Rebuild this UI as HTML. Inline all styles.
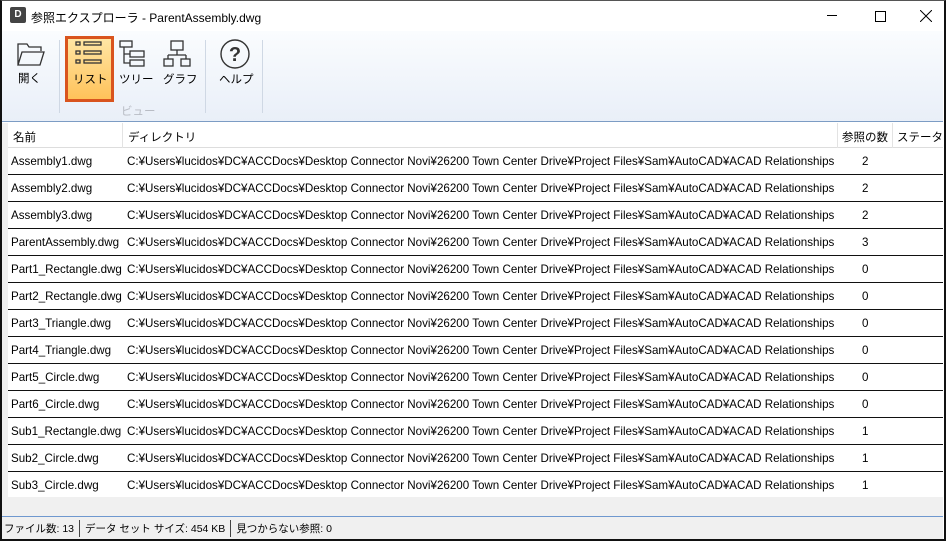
<!DOCTYPE html>
<html><head><meta charset="utf-8"><style>
*{margin:0;padding:0;box-sizing:border-box}
body{width:946px;height:541px;overflow:hidden;background:#fff;font-family:"Liberation Sans","Noto Sans CJK JP",sans-serif;font-size:12px;color:#000;position:relative}
.frame{position:absolute;left:0;top:0;width:946px;height:541px;border:2px solid #111;border-top:1px solid #555}
.title{position:absolute;left:2px;top:1px;width:941px;height:30px;background:#fff}
.title .t{position:absolute;left:29px;top:8px;font-size:12px}
.tb{position:absolute;left:2px;top:31px;width:941px;height:91px;background:linear-gradient(#fafcfe,#e9eff8);border-bottom:1px solid #7c9cc4}
.sep{position:absolute;top:9px;width:1px;height:73px;background:#cfd8e4}
.lbl{position:absolute;font-size:11.5px;text-align:center}
.sel{position:absolute;left:63px;top:5px;width:49px;height:66px;border:3px solid #d9541e;background:linear-gradient(#ffe6a4,#ffc25a)}
.hdr{position:absolute;left:8px;top:123px;width:935px;height:25px;background:#fff;border-bottom:1px solid #ddd;font-size:11.5px}
.hdr span{position:absolute;top:6px;white-space:nowrap}
.hdr i{position:absolute;top:0;width:1px;height:25px;background:#e3e3e3}
.row{position:absolute;left:8px;width:935px;height:27px;border-bottom:1px solid #111;background:#fff;font-size:11.6px}
.row span{position:absolute;top:7px;white-space:nowrap}
.left{position:absolute;left:2px;top:123px;width:6px;height:393px;background:#f0f0f0}
.gap{position:absolute;left:8px;top:497px;width:935px;height:19px;background:#f0f0f0}
.status{position:absolute;left:2px;top:516px;width:941px;height:23px;background:#f0f0f0;border-top:1px solid #6f98cf;display:flex;align-items:center;font-size:10.5px;padding-left:2px;white-space:nowrap}
.status i{width:1px;height:17px;background:#444;margin:0 5px}
</style></head><body>
<div class="title">
<div style="position:absolute;left:8px;top:6px;width:16px;height:16px;background:#444;border-radius:2px;color:#fff;font-size:10px;font-weight:bold;text-align:center;line-height:16px">D</div>
<span class="t">参照エクスプローラ - ParentAssembly.dwg</span>
<div style="position:absolute;left:825px;top:14px;width:10px;height:1px;background:#000"></div>
<div style="position:absolute;left:873px;top:10px;width:11px;height:11px;border:1px solid #000"></div>
<svg style="position:absolute;left:918px;top:9px" width="12" height="12"><path d="M0 0L12 12M12 0L0 12" stroke="#000" stroke-width="1"/></svg>
</div>
<div class="tb">
<svg style="position:absolute;left:14px;top:10px" width="30" height="26" fill="none" stroke="#333" stroke-width="1.3"><path d="M2 24V3h9l2 3h12v4M2 24l4-13h22l-4 13z"/></svg>
<div class="lbl" style="left:16px;top:39px">開く</div>
<div class="sep" style="left:57px"></div>
<div class="sel"></div>
<svg style="position:absolute;left:73px;top:9px" width="28" height="27" fill="none" stroke="#333" stroke-width="1.3"><rect x="1" y="2" width="4" height="3"/><rect x="9" y="2" width="17" height="3"/><rect x="1" y="11" width="4" height="3"/><rect x="9" y="11" width="17" height="3"/><rect x="1" y="20" width="4" height="3"/><rect x="9" y="20" width="17" height="3"/></svg>
<div class="lbl" style="left:71px;top:40px">リスト</div>
<svg style="position:absolute;left:117px;top:8px" width="30" height="28" fill="none" stroke="#333" stroke-width="1.3"><rect x="1" y="2" width="12" height="6"/><path d="M5 8v16h6M5 15h6"/><rect x="11" y="12" width="14" height="6"/><rect x="11" y="21" width="14" height="6"/></svg>
<div class="lbl" style="left:117px;top:40px">ツリー</div>
<svg style="position:absolute;left:161px;top:8px" width="30" height="28" fill="none" stroke="#333" stroke-width="1.3"><rect x="8" y="2" width="12" height="9"/><path d="M14 11v5M5 16h18M5 16v4M23 16v4"/><rect x="1" y="20" width="9" height="7"/><rect x="18" y="20" width="9" height="7"/></svg>
<div class="lbl" style="left:161px;top:40px">グラフ</div>
<div class="lbl" style="left:119px;top:72px;color:#b8bcc4">ビュー</div>
<div class="sep" style="left:203px"></div>
<svg style="position:absolute;left:217px;top:7px" width="32" height="32"><circle cx="16" cy="16" r="14" fill="none" stroke="#333" stroke-width="1.4"/><text x="16" y="23" font-family="Liberation Sans" font-size="20" font-weight="bold" text-anchor="middle" fill="#333">?</text></svg>
<div class="lbl" style="left:217px;top:40px">ヘルプ</div>
<div class="sep" style="left:260px"></div>
</div>
<div class="left"></div>
<div class="hdr"><span style="left:5px">名前</span><i style="left:114px"></i><span style="left:120px">ディレクトリ</span><i style="left:829px"></i><span style="left:834px">参照の数</span><i style="left:884px"></i><span style="left:889px">ステータス</span></div>
<div class="row" style="top:148px"><span style="left:3px">Assembly1.dwg</span><span style="left:119px">C:¥Users¥lucidos¥DC¥ACCDocs¥Desktop Connector Novi¥26200 Town Center Drive¥Project Files¥Sam¥AutoCAD¥ACAD Relationships</span><span style="left:854px">2</span></div>
<div class="row" style="top:175px"><span style="left:3px">Assembly2.dwg</span><span style="left:119px">C:¥Users¥lucidos¥DC¥ACCDocs¥Desktop Connector Novi¥26200 Town Center Drive¥Project Files¥Sam¥AutoCAD¥ACAD Relationships</span><span style="left:854px">2</span></div>
<div class="row" style="top:202px"><span style="left:3px">Assembly3.dwg</span><span style="left:119px">C:¥Users¥lucidos¥DC¥ACCDocs¥Desktop Connector Novi¥26200 Town Center Drive¥Project Files¥Sam¥AutoCAD¥ACAD Relationships</span><span style="left:854px">2</span></div>
<div class="row" style="top:229px"><span style="left:3px">ParentAssembly.dwg</span><span style="left:119px">C:¥Users¥lucidos¥DC¥ACCDocs¥Desktop Connector Novi¥26200 Town Center Drive¥Project Files¥Sam¥AutoCAD¥ACAD Relationships</span><span style="left:854px">3</span></div>
<div class="row" style="top:256px"><span style="left:3px">Part1_Rectangle.dwg</span><span style="left:119px">C:¥Users¥lucidos¥DC¥ACCDocs¥Desktop Connector Novi¥26200 Town Center Drive¥Project Files¥Sam¥AutoCAD¥ACAD Relationships</span><span style="left:854px">0</span></div>
<div class="row" style="top:283px"><span style="left:3px">Part2_Rectangle.dwg</span><span style="left:119px">C:¥Users¥lucidos¥DC¥ACCDocs¥Desktop Connector Novi¥26200 Town Center Drive¥Project Files¥Sam¥AutoCAD¥ACAD Relationships</span><span style="left:854px">0</span></div>
<div class="row" style="top:310px"><span style="left:3px">Part3_Triangle.dwg</span><span style="left:119px">C:¥Users¥lucidos¥DC¥ACCDocs¥Desktop Connector Novi¥26200 Town Center Drive¥Project Files¥Sam¥AutoCAD¥ACAD Relationships</span><span style="left:854px">0</span></div>
<div class="row" style="top:337px"><span style="left:3px">Part4_Triangle.dwg</span><span style="left:119px">C:¥Users¥lucidos¥DC¥ACCDocs¥Desktop Connector Novi¥26200 Town Center Drive¥Project Files¥Sam¥AutoCAD¥ACAD Relationships</span><span style="left:854px">0</span></div>
<div class="row" style="top:364px"><span style="left:3px">Part5_Circle.dwg</span><span style="left:119px">C:¥Users¥lucidos¥DC¥ACCDocs¥Desktop Connector Novi¥26200 Town Center Drive¥Project Files¥Sam¥AutoCAD¥ACAD Relationships</span><span style="left:854px">0</span></div>
<div class="row" style="top:391px"><span style="left:3px">Part6_Circle.dwg</span><span style="left:119px">C:¥Users¥lucidos¥DC¥ACCDocs¥Desktop Connector Novi¥26200 Town Center Drive¥Project Files¥Sam¥AutoCAD¥ACAD Relationships</span><span style="left:854px">0</span></div>
<div class="row" style="top:418px"><span style="left:3px">Sub1_Rectangle.dwg</span><span style="left:119px">C:¥Users¥lucidos¥DC¥ACCDocs¥Desktop Connector Novi¥26200 Town Center Drive¥Project Files¥Sam¥AutoCAD¥ACAD Relationships</span><span style="left:854px">1</span></div>
<div class="row" style="top:445px"><span style="left:3px">Sub2_Circle.dwg</span><span style="left:119px">C:¥Users¥lucidos¥DC¥ACCDocs¥Desktop Connector Novi¥26200 Town Center Drive¥Project Files¥Sam¥AutoCAD¥ACAD Relationships</span><span style="left:854px">1</span></div>
<div class="row" style="top:472px"><span style="left:3px">Sub3_Circle.dwg</span><span style="left:119px">C:¥Users¥lucidos¥DC¥ACCDocs¥Desktop Connector Novi¥26200 Town Center Drive¥Project Files¥Sam¥AutoCAD¥ACAD Relationships</span><span style="left:854px">1</span></div>
<div class="gap"></div>
<div class="status"><span>ファイル数: 13</span><i></i><span>データ セット サイズ: 454 KB</span><i></i><span>見つからない参照: 0</span></div>
<div class="frame"></div>
</body></html>
